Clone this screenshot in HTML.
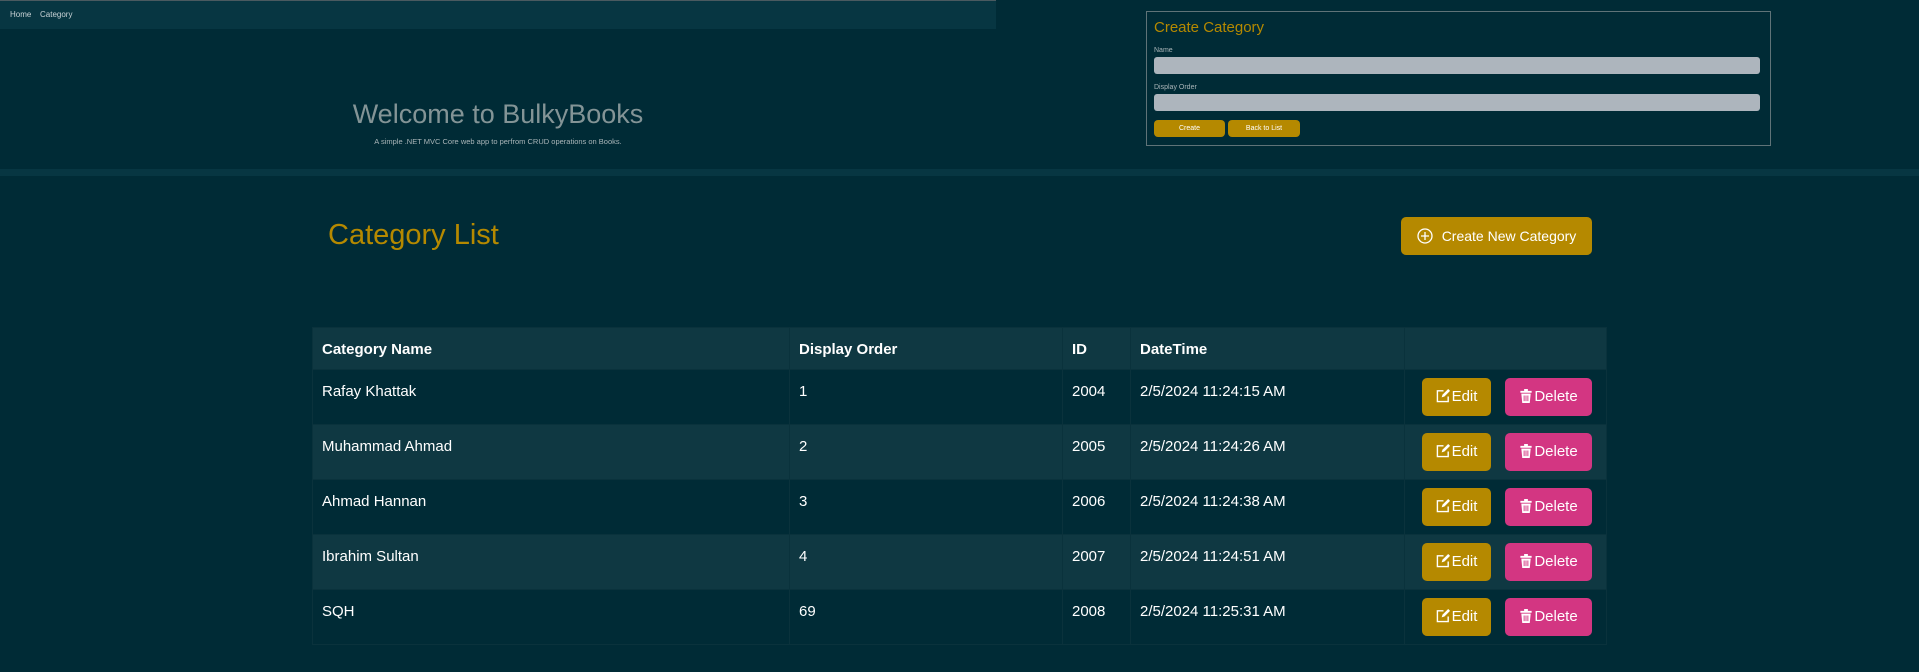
<!DOCTYPE html>
<html><head><meta charset="utf-8"><style>
*{box-sizing:border-box;margin:0;padding:0}
body{width:1919px;height:672px;background:#002b36;font-family:"Liberation Sans",sans-serif;position:relative;overflow:hidden;color:#fff}
.a{position:absolute}
.nav{left:0;top:0;width:996px;height:29px;background:#073642;border-top:1px solid #4a5a60}
.nav span{position:absolute;top:9px;font-size:8px;color:#c9d3d6}
.band{left:0;top:169px;width:1919px;height:7px;background:#073642}
.btn{background:#b58900;border-radius:4px;color:#fff;text-align:center}
table{position:absolute;left:312px;top:327px;width:1295px;border-collapse:collapse;font-size:15px}
td,th{border:1px solid #0a323c;text-align:left;vertical-align:top;padding:13px 9px 0 9px;height:55px}
th{height:42px;padding-top:13px;background:#0f3842;font-weight:bold}
tr:nth-child(odd) td{background:#0f3842}
tr:nth-child(even) td{background:#002b36}
.act{position:relative}
.e,.d{position:absolute;top:8px;height:38px;border-radius:5px;font-size:15px;line-height:38px;color:#fff;text-align:center}
.e{left:17px;width:69px;background:#b58900}
.d{left:100px;width:87px;background:#d33682}
.e svg,.d svg{vertical-align:-2px;margin-right:1px}
</style></head><body>
<div class="a nav"><span style="left:10px">Home</span><span style="left:40px">Category</span></div>
<div class="a" style="left:0;width:996px;top:99px;text-align:center;font-size:27px;color:#839496">Welcome to BulkyBooks</div>
<div class="a" style="left:0;width:996px;top:137px;text-align:center;font-size:7.5px;color:#a9b5b8">A simple .NET MVC Core web app to perfrom CRUD operations on Books.</div>
<div class="a" style="left:1146px;top:11px;width:625px;height:135px;border:1px solid #5f7378"></div>
<div class="a" style="left:1154px;top:19px;font-size:15px;color:#b58900">Create Category</div>
<div class="a" style="left:1154px;top:47px;font-size:7px;color:#a9b5b8">Name</div>
<div class="a" style="left:1154px;top:57px;width:606px;height:17px;background:#adb5bd;border-radius:3px"></div>
<div class="a" style="left:1154px;top:84px;font-size:7px;color:#a9b5b8">Display Order</div>
<div class="a" style="left:1154px;top:94px;width:606px;height:17px;background:#adb5bd;border-radius:3px"></div>
<div class="a btn" style="left:1154px;top:120px;width:71px;height:17px;font-size:7px;line-height:17px">Create</div>
<div class="a btn" style="left:1228px;top:120px;width:72px;height:17px;font-size:7px;line-height:17px">Back to List</div>
<div class="a band"></div>
<div class="a" style="left:328px;top:219px;font-size:29px;color:#b58900">Category List</div>
<div class="a btn" style="left:1401px;top:217px;width:191px;height:38px;line-height:38px;font-size:14px;border-radius:5px">
<svg width="16" height="16" viewBox="0 0 16 16" style="vertical-align:-3px;margin-right:9px"><circle cx="8" cy="8" r="7" fill="none" stroke="#fff" stroke-width="1.3"/><path d="M8 4v8M4 8h8" stroke="#fff" stroke-width="1.3"/></svg>Create New Category</div>
<table>
<tr><th style="width:477px">Category Name</th><th style="width:273px">Display Order</th><th style="width:68px">ID</th><th style="width:274px">DateTime</th><th></th></tr>
<tr><td>Rafay Khattak</td><td>1</td><td>2004</td><td>2/5/2024 11:24:15 AM</td><td class="act"><div class="e"><svg width="15" height="15" viewBox="0 0 16 16"><path d="M13 9v5.5H1.5V3H8" fill="none" stroke="#fff" stroke-width="1.5"/><path d="M6 10l1-3 6-6 2 2-6 6z" fill="#fff"/></svg>Edit</div><div class="d"><svg width="14" height="15" viewBox="0 0 14 16"><path d="M1 3h12v2H1zM5 1h4v2H5z" fill="#fff"/><path d="M2 6h10l-1 10H3z" fill="#fff"/><path d="M5 8v6M7 8v6M9 8v6" stroke="#d33682" stroke-width="1"/></svg>Delete</div></td></tr>
<tr><td>Muhammad Ahmad</td><td>2</td><td>2005</td><td>2/5/2024 11:24:26 AM</td><td class="act"><div class="e"><svg width="15" height="15" viewBox="0 0 16 16"><path d="M13 9v5.5H1.5V3H8" fill="none" stroke="#fff" stroke-width="1.5"/><path d="M6 10l1-3 6-6 2 2-6 6z" fill="#fff"/></svg>Edit</div><div class="d"><svg width="14" height="15" viewBox="0 0 14 16"><path d="M1 3h12v2H1zM5 1h4v2H5z" fill="#fff"/><path d="M2 6h10l-1 10H3z" fill="#fff"/><path d="M5 8v6M7 8v6M9 8v6" stroke="#d33682" stroke-width="1"/></svg>Delete</div></td></tr>
<tr><td>Ahmad Hannan</td><td>3</td><td>2006</td><td>2/5/2024 11:24:38 AM</td><td class="act"><div class="e"><svg width="15" height="15" viewBox="0 0 16 16"><path d="M13 9v5.5H1.5V3H8" fill="none" stroke="#fff" stroke-width="1.5"/><path d="M6 10l1-3 6-6 2 2-6 6z" fill="#fff"/></svg>Edit</div><div class="d"><svg width="14" height="15" viewBox="0 0 14 16"><path d="M1 3h12v2H1zM5 1h4v2H5z" fill="#fff"/><path d="M2 6h10l-1 10H3z" fill="#fff"/><path d="M5 8v6M7 8v6M9 8v6" stroke="#d33682" stroke-width="1"/></svg>Delete</div></td></tr>
<tr><td>Ibrahim Sultan</td><td>4</td><td>2007</td><td>2/5/2024 11:24:51 AM</td><td class="act"><div class="e"><svg width="15" height="15" viewBox="0 0 16 16"><path d="M13 9v5.5H1.5V3H8" fill="none" stroke="#fff" stroke-width="1.5"/><path d="M6 10l1-3 6-6 2 2-6 6z" fill="#fff"/></svg>Edit</div><div class="d"><svg width="14" height="15" viewBox="0 0 14 16"><path d="M1 3h12v2H1zM5 1h4v2H5z" fill="#fff"/><path d="M2 6h10l-1 10H3z" fill="#fff"/><path d="M5 8v6M7 8v6M9 8v6" stroke="#d33682" stroke-width="1"/></svg>Delete</div></td></tr>
<tr><td>SQH</td><td>69</td><td>2008</td><td>2/5/2024 11:25:31 AM</td><td class="act"><div class="e"><svg width="15" height="15" viewBox="0 0 16 16"><path d="M13 9v5.5H1.5V3H8" fill="none" stroke="#fff" stroke-width="1.5"/><path d="M6 10l1-3 6-6 2 2-6 6z" fill="#fff"/></svg>Edit</div><div class="d"><svg width="14" height="15" viewBox="0 0 14 16"><path d="M1 3h12v2H1zM5 1h4v2H5z" fill="#fff"/><path d="M2 6h10l-1 10H3z" fill="#fff"/><path d="M5 8v6M7 8v6M9 8v6" stroke="#d33682" stroke-width="1"/></svg>Delete</div></td></tr>
</table>
</body></html>
